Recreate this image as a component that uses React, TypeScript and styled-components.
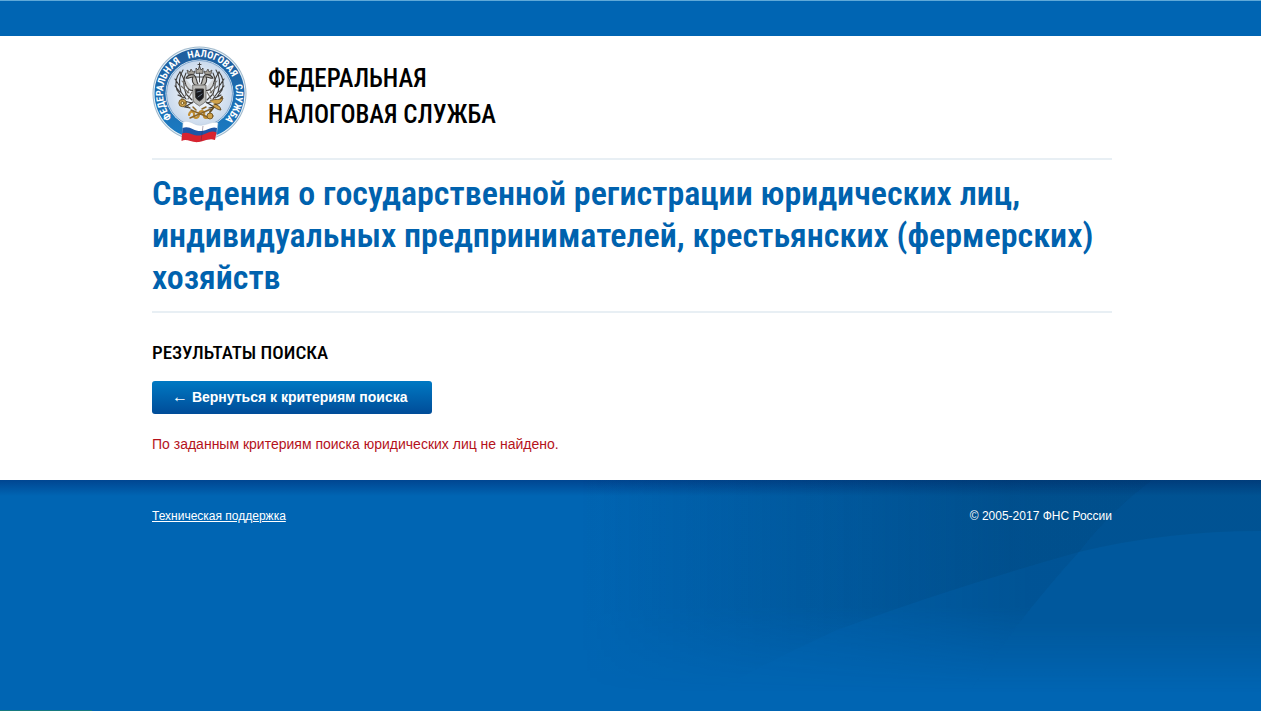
import React from 'react';
import styled, { createGlobalStyle } from 'styled-components';

const narrow = '"Roboto Condensed", "DejaVu Sans Condensed", sans-serif';

const GlobalStyle = createGlobalStyle`
  *, *::before, *::after { box-sizing: border-box; }
  body {
    margin: 0;
    background: #fff;
    color: #000;
    font-family: "Liberation Sans", Arial, sans-serif;
    font-size: 14px;
    line-height: 20px;
  }
`;

const Page = styled.div`
  display: flex;
  flex-direction: column;
  min-height: 100vh;
`;

const TopBar = styled.div`
  height: 36px;
  background: #0065b3;
  border-top: 1px solid #5fa9d8;
`;

const Container = styled.div`
  width: 100%;
  max-width: 963px;
  margin: 0 auto;
  padding-left: 3px;
`;

const Header = styled.header`
  display: flex;
  align-items: flex-start;
  gap: 20px;
  padding: 10px 0 14px;
  border-bottom: 2px solid #e8eff4;
`;

const EmblemSvg = styled.svg`
  display: block;
  width: 96px;
  height: 98px;
`;

const Agency = styled.div`
  padding-top: 15px;
  font: 500 25px/36px ${narrow};
  text-transform: uppercase;
`;

const Title = styled.h1`
  margin: 0;
  padding: 12px 0 13px;
  border-bottom: 2px solid #e8eff4;
  color: #0062ae;
  font: 600 34px/42px ${narrow};
`;

const Results = styled.main`
  display: flex;
  flex-direction: column;
  align-items: flex-start;
  padding: 24px 0 26px;
`;

const SectionTitle = styled.h2`
  margin: 0 0 12px;
  font: 500 19px/32px ${narrow};
  text-transform: uppercase;
`;

const BackButton = styled.button`
  height: 33px;
  margin: 0 0 20px;
  padding: 0 24px 1px 20px;
  border: 0;
  border-radius: 3px;
  background: linear-gradient(#0079c3, #004c98);
  color: #fff;
  font: 700 14px/32px "Liberation Sans", Arial, sans-serif;
  cursor: pointer;
`;

const Message = styled.p`
  margin: 0;
  color: #b5121b;
`;

const Footer = styled.footer`
  position: relative;
  flex: 1;
  overflow: hidden;
  background: #0065b3;

  &::before {
    content: "";
    position: absolute;
    inset: 0 0 auto;
    height: 16px;
    background: linear-gradient(rgba(0, 26, 98, 0.42), rgba(0, 40, 120, 0));
  }

  &::after {
    content: "";
    position: absolute;
    left: 0;
    bottom: 0;
    width: 92px;
    height: 1px;
    background: #157a80;
  }
`;

const Backdrop = styled.svg`
  position: absolute;
  top: 0;
  right: 0;
  width: 701px;
  height: 231px;
`;

const FooterRow = styled(Container)`
  position: relative;
  display: flex;
  justify-content: space-between;
  padding-top: 26px;
  color: #fff;
  font-size: 12px;
`;

const FooterLink = styled.a`
  color: #fff;
  text-decoration: underline;
`;

const Arrow = styled.span`
  font-weight: 400;
  font-size: 16px;
`;

function Emblem() {
  return (
    <EmblemSvg viewBox="0 0 96 98" role="img" aria-label="Эмблема ФНС">
      <defs>
        <linearGradient id="ring" x1="0" y1="0" x2="0" y2="1">
          <stop offset="0" stopColor="#1f5c9c" />
          <stop offset="1" stopColor="#1a7cc4" />
        </linearGradient>
        <radialGradient id="disc">
          <stop offset="0" stopColor="#ffffff" />
          <stop offset="1" stopColor="#c9d9ec" />
        </radialGradient>
        <path id="ringPath" d="M47.5 84A36.5 36.5 0 0 1 47.5 11A36.5 36.5 0 0 1 47.5 84" />
      </defs>
      <circle cx="47.5" cy="47.5" r="47" fill="#9fb9cc" />
      <circle cx="47.5" cy="47.5" r="46" fill="#e9f2f8" />
      <circle cx="47.5" cy="47.5" r="45" fill="url(#ring)" />
      <circle cx="47.5" cy="47.5" r="34" fill="#e9f2f8" />
      <circle cx="47.5" cy="47.5" r="33" fill="url(#disc)" stroke="#5f8fc0" strokeWidth="0.8" />
      <g fill="#fff" fontFamily="Roboto Condensed, sans-serif" fontWeight="700" fontSize="10">
        <text><textPath href="#ringPath" startOffset="31">ФЕДЕРАЛЬНАЯ</textPath></text>
        <text><textPath href="#ringPath" startOffset="103">НАЛОГОВАЯ</textPath></text>
        <text><textPath href="#ringPath" startOffset="163">СЛУЖБА</textPath></text>
      </g>
      {/* double-headed eagle: wings, heads, crowns, shield, tail */}
      <g stroke="#3c3a38" strokeLinecap="round" fill="none">
        <g id="wing" strokeWidth="1.1">
          <path d="M43 44C38 46 34 42 33 36C31 31 30 29 28 26" fill="#d3d6d8" />
          <path d="M28 26C24 31 23 38 25 44M31 24C27 30 27 39 29 46M34 27C31 33 31 40 34 48M25 44L30 51M29 46L34 53M34 48L40 54M23 33L27 39M23 40L28 46M26 49L32 52M32 55L40 57" />
          <path d="M37 44L33 50M40 46L36 53M30 35L36 42M29 40L37 47" stroke="#77736c" />
          <path d="M44 40C41 38 39 34 41 31C38 31 36 33 34 32C36 29 39 28 42 29C45 31 44 35 46 38" fill="#b8b7b2" />
          <path d="M36 28L35 24L38 26L39 23L41 26L43 25L42 28Z" fill="#a39f97" strokeWidth="0.7" />
        </g>
        <use href="#wing" transform="matrix(-1 0 0 1 95 0)" />
        <path d="M44 27L44 22L46 24L47.500 20L49 24L51 22L51 27Z" fill="#aaa69e" strokeWidth="0.8" />
        <path d="M47.500 17V21M46 18.500H49M43 31H52M47.500 27V36" strokeWidth="0.9" />
        <path d="M41 39H54V53C54 57 50 58 47.500 60C45 58 41 57 41 53Z" fill="#b9b9b6" strokeWidth="0.6" />
        <path d="M43.500 43H51.500V50C51.500 53 49 54 47.500 55C46 54 43.500 53 43.500 50Z" fill="#18191d" />
        <path d="M45 46L49 45M46 51L50 48" stroke="#7b8ba0" strokeWidth="0.8" />
        <path d="M41 56L33 61L38 62M54 56L62 61L57 62" strokeWidth="1.2" />
      </g>
      {/* gold sceptre, orb and caduceus */}
      <g stroke="#6f531f" fill="#d0a24b" strokeWidth="0.9" strokeLinecap="round">
        <circle cx="30.500" cy="57" r="3.700" />
        <circle cx="30.500" cy="57" r="1.500" fill="#f4e6bc" />
        <path d="M30 52V54M34 59L38 62" />
        <path d="M37 69C38 63 43 66 42 69C41 73 47 73 47 68C48 63 53 65 52 69C51 73 57 73 58 68" fill="none" stroke="#c18e32" strokeWidth="2.200" />
        <path d="M39 64L58 72M38 72L59 63M41 61L44 64M50 63L54 61" fill="none" stroke="#8b6527" strokeWidth="1.500" />
        <path d="M58 66L70 51" fill="none" stroke="#654b20" strokeWidth="2" />
        <path d="M58 55C63 52 65 55 71 52C70 56 67 59 63 58M62 58C66 59 68 60 69 64C66 64 63 62 61 60" stroke="#5a4525" />
        <circle cx="58" cy="70" r="3" />
      </g>
      {/* tricolour ribbon */}
      <path d="M31 76C39 73 42 81 51 79C57 78 61 75 66 77L64 92C58 89 54 94 48 95C40 97 36 91 30 94Z" fill="#fff" stroke="#b7c6d8" strokeWidth="0.500" />
      <path d="M30.500 82C38 79 42 86 50 85C56 84 60 80 65 82L64.500 88C58 85 54 90 48 91C40 92 36 87 30 90Z" fill="#1d56a6" />
      <path d="M30 87.500C37 84.500 41 90.500 48 89.500C55 88.500 58 83.500 64.500 86.500L63 94C57 92 53 95 47 96C39 97 35 92 29.500 95Z" fill="#d8232f" />
      <path d="M51 80L49 95" stroke="#3c2d50" strokeOpacity="0.400" strokeWidth="1" />
    </EmblemSvg>
  );
}

function FooterBackdrop() {
  return (
    <Backdrop viewBox="0 0 701 231" aria-hidden="true">
      <defs>
        <linearGradient id="across" gradientUnits="userSpaceOnUse" x1="20" y1="0" x2="470" y2="0">
          <stop offset="0" stopColor="#002848" stopOpacity="0" />
          <stop offset="0.7" stopColor="#002848" stopOpacity="0.18" />
          <stop offset="1" stopColor="#002848" stopOpacity="0.28" />
        </linearGradient>
        <linearGradient id="arc" gradientUnits="userSpaceOnUse" x1="20" y1="0" x2="400" y2="0">
          <stop offset="0" stopColor="#002848" stopOpacity="0" />
          <stop offset="1" stopColor="#002848" stopOpacity="0.11" />
        </linearGradient>
        <linearGradient id="fade" x1="0" y1="0" x2="0" y2="1">
          <stop offset="0.55" stopColor="#fff" />
          <stop offset="0.92" stopColor="#000" />
        </linearGradient>
        <linearGradient id="fadeLow" x1="0" y1="0" x2="0" y2="1">
          <stop offset="0.62" stopColor="#fff" />
          <stop offset="0.92" stopColor="#000" />
        </linearGradient>
        <mask id="down"><rect width="701" height="231" fill="url(#fade)" /></mask>
        <mask id="downLow"><rect width="701" height="231" fill="url(#fadeLow)" /></mask>
      </defs>
      <g mask="url(#down)">
        <path d="M0 0H592Q550 32 519 72Q459 138 410 211L400 231H0Z" fill="url(#across)" />
        <path d="M0 0H701V51Q605 51 519 72Q390 108 277 150Q200 185 120 231H0Z" fill="url(#arc)" />
      </g>
      <path d="M592 0H701V231H400L410 211Q459 138 519 72Q550 32 592 0Z" fill="#002848" fillOpacity="0.2" mask="url(#downLow)" />
    </Backdrop>
  );
}

export default function App() {
  return (
    <Page>
      <GlobalStyle />
      <TopBar />
      <Container>
        <Header>
          <Emblem />
          <Agency>Федеральная<br />налоговая служба</Agency>
        </Header>
        <Title>
          Сведения о государственной регистрации юридических лиц,
          индивидуальных предпринимателей, крестьянских (фермерских) хозяйств
        </Title>
        <Results>
          <SectionTitle>Результаты поиска</SectionTitle>
          <BackButton type="button"><Arrow>←</Arrow> Вернуться к критериям поиска</BackButton>
          <Message>По заданным критериям поиска юридических лиц не найдено.</Message>
        </Results>
      </Container>
      <Footer>
        <FooterBackdrop />
        <FooterRow>
          <FooterLink href="#support">Техническая поддержка</FooterLink>
          <span>© 2005-2017 ФНС России</span>
        </FooterRow>
      </Footer>
    </Page>
  );
}
